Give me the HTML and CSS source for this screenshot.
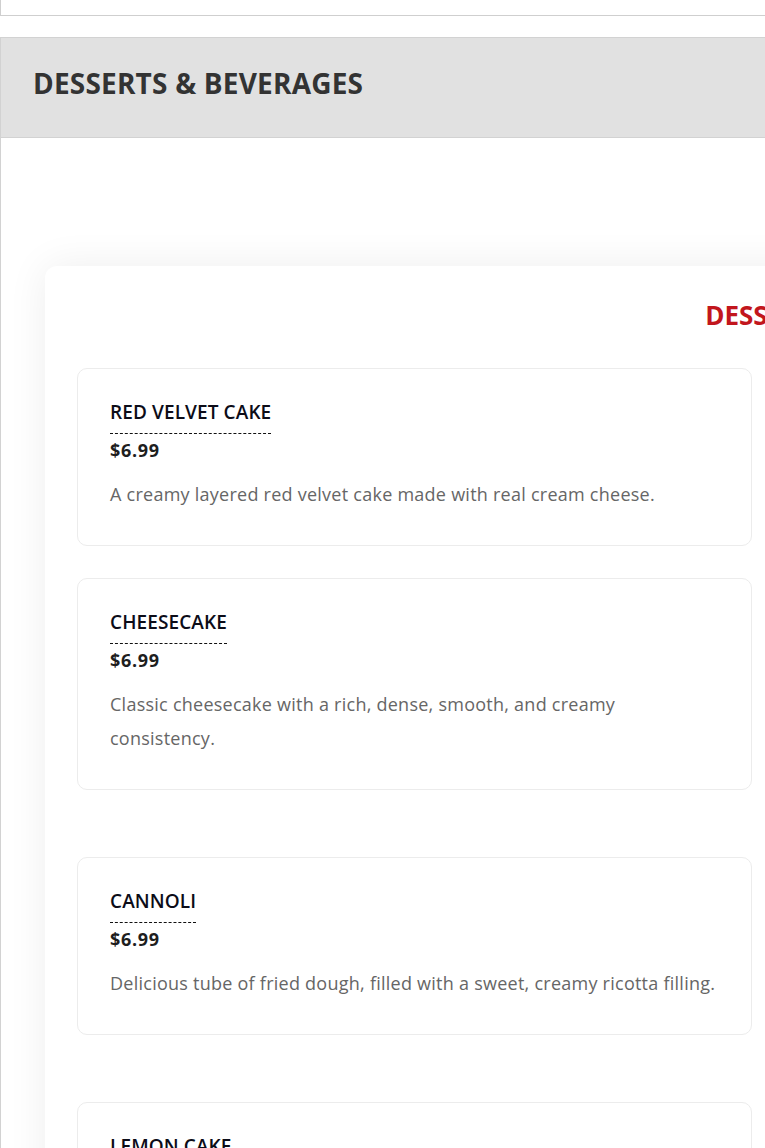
FILE: index.html
```html
<!DOCTYPE html>
<html lang="en">
<head>
<meta charset="utf-8">
<title>Desserts &amp; Beverages</title>
<link rel="stylesheet" href="styles.css">
</head>
<body>
<div class="page">
  <div class="topbar"></div>
  <section class="section">
    <header class="section-head">
      <h1 class="section-title">DESSERTS &amp; BEVERAGES</h1>
    </header>
    <div class="section-body">
      <div class="menu-card">
        <h2 class="menu-title">DESSERTS</h2>
        <div class="menu-grid">
          <div class="menu-col">
            <article class="item">
              <h3 class="item-name">RED VELVET CAKE</h3>
              <div class="item-price">$6.99</div>
              <p class="item-desc">A creamy layered red velvet cake made with real cream cheese.</p>
            </article>
            <article class="item item--spaced">
              <h3 class="item-name">CHEESECAKE</h3>
              <div class="item-price">$6.99</div>
              <p class="item-desc">Classic cheesecake with a rich, dense, smooth, and creamy consistency.</p>
            </article>
            <article class="item item--spaced">
              <h3 class="item-name">CANNOLI</h3>
              <div class="item-price">$6.99</div>
              <p class="item-desc">Delicious tube of fried dough, filled with a sweet, creamy ricotta filling.</p>
            </article>
            <article class="item">
              <h3 class="item-name">LEMON CAKE</h3>
              <div class="item-price">$6.99</div>
              <p class="item-desc">A moist lemon cake topped with a light lemon glaze.</p>
            </article>
          </div>
          <div class="menu-col"></div>
        </div>
      </div>
    </div>
  </section>
</div>
</body>
</html>
```

FILE: styles.css
```css
html, body {
  margin: 0;
  padding: 0;
  overflow-x: hidden;
  background: #ffffff;
}

body {
  font-family: "Open Sans", "Liberation Sans", sans-serif;
  color: #222;
}

.page {
  width: 1520px;
}

.topbar {
  height: 15px;
  border-left: 1px solid #cfcfcf;
  border-bottom: 1px solid #cfcfcf;
}

.section {
  margin-top: 21px;
}

.section-head {
  background: #e1e1e1;
  border: 1px solid #d2d2d2;
  padding: 28px 32px 37px;
}

.section-title {
  margin: 0;
  font-size: 28px;
  line-height: 34px;
  font-weight: 700;
  letter-spacing: 0.2px;
  color: #333333;
}

.section-body {
  border-left: 1px solid #d2d2d2;
  padding: 128px 0 60px 44px;
}

.menu-card {
  width: 1380px;
  background: #fff;
  border-radius: 12px;
  box-shadow: 0 0 40px rgba(0, 0, 0, 0.07);
  padding: 31px 32px 40px;
}

.menu-title {
  margin: 0 0 35px;
  text-align: center;
  font-size: 26px;
  line-height: 36px;
  font-weight: 700;
  color: #c2161d;
}

.menu-grid {
  display: grid;
  grid-template-columns: 675px 675px;
  column-gap: 30px;
  align-items: start;
}

.menu-col {
  display: flex;
  flex-direction: column;
  gap: 32px;
}

.item {
  border: 1px solid #ececec;
  border-radius: 10px;
  padding: 29px 32px 34px;
  background: #fff;
}

.item--spaced {
  margin-bottom: 35px;
}

.item-name {
  display: inline-block;
  margin: 0;
  padding-bottom: 7px;
  border-bottom: 1px dashed #111;
  font-size: 19px;
  line-height: 28px;
  font-weight: 600;
  letter-spacing: 0.1px;
  color: #0c0c18;
}

.item-price {
  margin-top: 4px;
  font-size: 18px;
  line-height: 24px;
  font-weight: 700;
  letter-spacing: 0.7px;
  color: #1e1e1e;
}

.item-desc {
  margin: 15px 0 0;
  font-size: 18px;
  line-height: 34px;
  letter-spacing: 0.25px;
  color: #666666;
}
```
